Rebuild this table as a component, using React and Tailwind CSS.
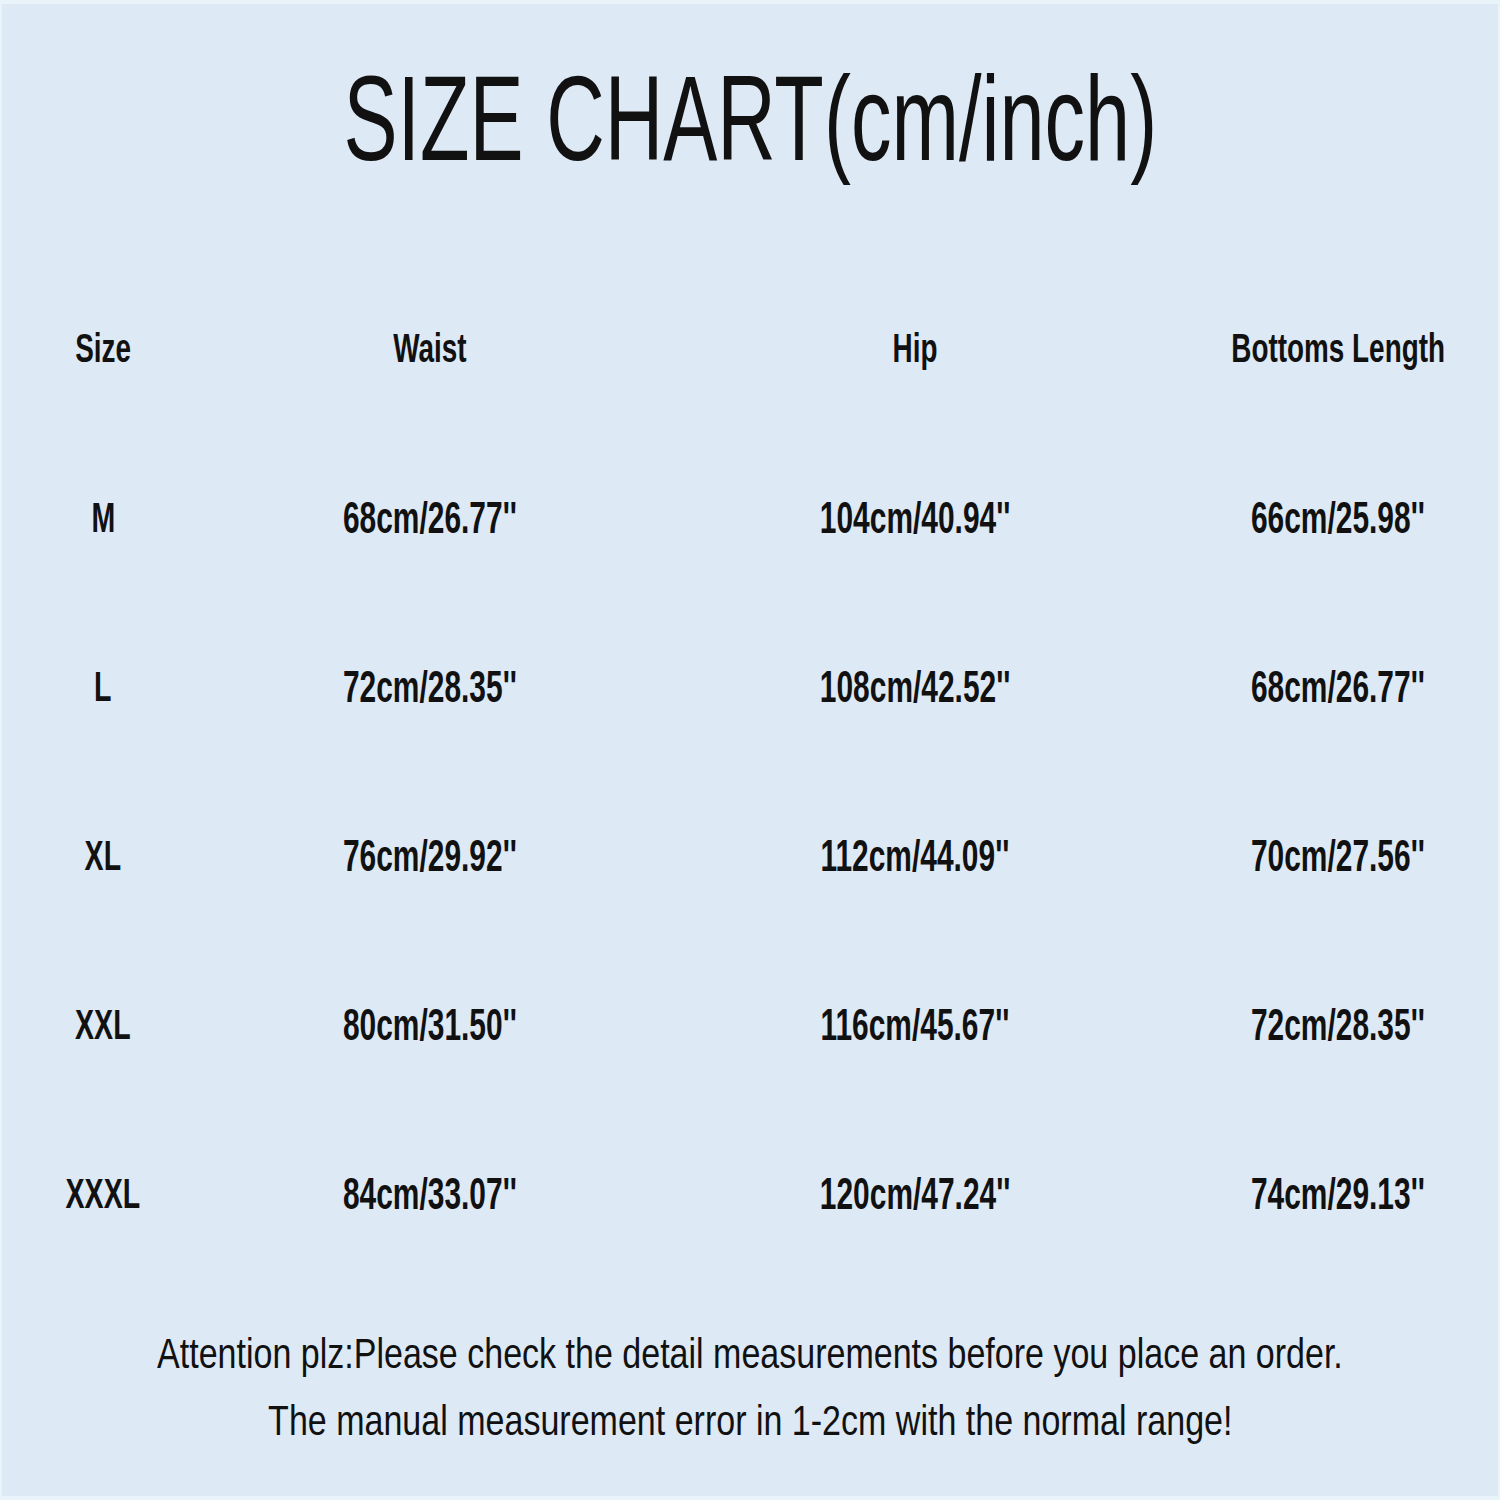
const rows = [
  ['M', '68cm/26.77\'\'', '104cm/40.94\'\'', '66cm/25.98\'\''],
  ['L', '72cm/28.35\'\'', '108cm/42.52\'\'', '68cm/26.77\'\''],
  ['XL', '76cm/29.92\'\'', '112cm/44.09\'\'', '70cm/27.56\'\''],
  ['XXL', '80cm/31.50\'\'', '116cm/45.67\'\'', '72cm/28.35\'\''],
  ['XXXL', '84cm/33.07\'\'', '120cm/47.24\'\'', '74cm/29.13\'\''],
];

const headers = ['Size', 'Waist', 'Hip', 'Bottoms Length'];

const Cell = ({ children, size }) => (
  <div className="flex items-center justify-center">
    <span className={`inline-block whitespace-nowrap scale-x-[0.68] font-bold leading-none ${size}`}>
      {children}
    </span>
  </div>
);

const App = () => {
  return (
    <div
      className="w-[1500px] h-[1500px] bg-[#dde9f5] text-[#111] shadow-[inset_2px_4px_0_#e9f3fa,inset_-2px_-4px_0_#e9f3fa] overflow-hidden"
      style={{ fontFamily: '"Liberation Sans", Arial, sans-serif' }}
    >
      <div className="h-[264px] pt-[58px] text-center">
        <span className="inline-block whitespace-nowrap scale-x-[0.67] text-[121px] leading-none">
          SIZE CHART(cm/inch)
        </span>
      </div>

      <div className="grid grid-cols-[206px_448px_522px_324px] auto-rows-[169px]">
        {headers.map((h) => (
          <Cell key={h} size="text-[41px]">{h}</Cell>
        ))}
        {rows.map((r) =>
          r.map((v, i) => (
            <Cell key={r[0] + i} size={i === 0 ? 'text-[42px]' : 'text-[44px]'}>{v}</Cell>
          ))
        )}
      </div>

      <div className="pt-[42px] text-center text-[42px] leading-[67px]">
        <p>
          <span className="inline-block whitespace-nowrap scale-x-[0.81]">
            Attention plz:Please check the detail measurements before you place an order.
          </span>
        </p>
        <p>
          <span className="inline-block whitespace-nowrap scale-x-[0.81]">
            The manual measurement error in 1-2cm with the normal range!
          </span>
        </p>
      </div>
    </div>
  );
};

export default App;
